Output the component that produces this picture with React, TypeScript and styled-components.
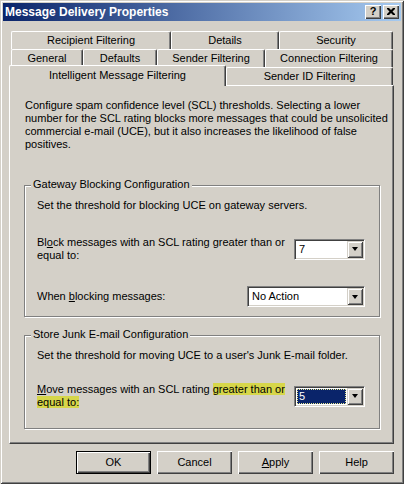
import React from 'react'
import styled, {createGlobalStyle} from 'styled-components'

const GlobalStyle = createGlobalStyle`
  html, body {
    margin: 0;
    padding: 0;
    background: #d4d0c8;
  }
  body {
    font-family: "Liberation Sans", Arial, sans-serif;
    font-size: 11px;
    line-height: 13px;
    color: #000;
  }
`

const Window = styled.div`
  box-sizing: border-box;
  width: 404px;
  height: 484px;
  padding: 3px;
  background: #d4d0c8;
  box-shadow: inset 1px 1px 0 #d4d0c8, inset -1px -1px 0 #404040,
    inset 2px 2px 0 #fff, inset -2px -2px 0 #808080;
  display: flex;
  flex-direction: column;
`

const TitleBar = styled.div`
  height: 18px;
  display: flex;
  align-items: center;
  padding: 0 2px;
  background: linear-gradient(to right, #0a246a, #a6caf0);
`

const TitleText = styled.div`
  flex: 1;
  color: #fff;
  font-weight: bold;
  font-size: 12px;
  white-space: nowrap;
`

const CaptionButton = styled.div<{$gap?: number}>`
  box-sizing: border-box;
  width: 16px;
  height: 14px;
  margin-left: ${p => p.$gap ?? 0}px;
  display: flex;
  align-items: center;
  justify-content: center;
  background: #d4d0c8;
  box-shadow: inset 1px 1px 0 #fff, inset -1px -1px 0 #404040,
    inset -2px -2px 0 #808080;
  font-weight: bold;
  font-size: 11px;
  line-height: 11px;
  padding-bottom: 1px;
`

const Body = styled.div`
  display: flex;
  flex-direction: column;
  padding: 10px 7px 0 6px;
`

const TabStrip = styled.div`
  display: flex;
  flex-direction: column;
`

const TabRow = styled.div`
  display: flex;
  align-items: flex-start;
  height: 18px;
  padding-left: 2px;
`

const Tab = styled.div<{$w: number; $active?: boolean}>`
  box-sizing: border-box;
  position: relative;
  width: ${p => p.$w}px;
  height: ${p => (p.$active ? 21 : 18)}px;
  margin: ${p => (p.$active ? '-2px 0 0 -2px' : '0')};
  z-index: ${p => (p.$active ? 2 : 1)};
  display: flex;
  align-items: center;
  justify-content: center;
  padding-bottom: ${p => (p.$active ? 2 : 0)}px;
  background: #d4d0c8;
  border-top: 1px solid #fff;
  border-left: 1px solid #fff;
  border-right: 1px solid #404040;
  border-radius: 2px 2px 0 0;
  box-shadow: inset -1px 0 0 #808080;
  white-space: nowrap;
`

const Panel = styled.div`
  box-sizing: border-box;
  position: relative;
  z-index: 1;
  height: 359px;
  padding: 13px 0 0 14px;
  border: 1px solid;
  border-color: #fff #404040 #404040 #fff;
  box-shadow: inset -1px -1px 0 #808080;
  display: flex;
  flex-direction: column;
`

const Description = styled.div`
  padding-left: 1px;
  white-space: nowrap;
`

const GroupBox = styled.div<{$h: number; $top: number}>`
  box-sizing: border-box;
  position: relative;
  width: 356px;
  height: ${p => p.$h}px;
  margin-top: ${p => p.$top}px;
  padding: 13px 14px 0 12px;
  border: 1px solid #808080;
  box-shadow: inset 1px 1px 0 #fff, 1px 1px 0 #fff;
  display: flex;
  flex-direction: column;
`

const Legend = styled.div`
  position: absolute;
  top: -8px;
  left: 6px;
  padding: 0 2px;
  background: #d4d0c8;
  white-space: nowrap;
`

const Line = styled.div`
  white-space: nowrap;
`

const FieldRow = styled.div<{$top: number}>`
  display: flex;
  align-items: center;
  justify-content: space-between;
  margin-top: ${p => p.$top}px;
`

const Highlight = styled.span`
  background: #d6d64a;
`

const Combo = styled.div<{$w: number}>`
  box-sizing: border-box;
  width: ${p => p.$w}px;
  height: 21px;
  display: flex;
  padding: 1px;
  background: #fff;
  border: 1px solid;
  border-color: #808080 #fff #fff #808080;
  box-shadow: inset 1px 1px 0 #404040, inset -1px -1px 0 #d4d0c8;
`

const ComboField = styled.div<{$selected?: boolean}>`
  box-sizing: border-box;
  flex: 1;
  display: flex;
  align-items: center;
  padding-left: 1px;
  margin: 1px 1px 1px 1px;
  background: ${p => (p.$selected ? '#0a246a' : '#fff')};
  color: ${p => (p.$selected ? '#fff' : '#000')};
  border: 1px ${p => (p.$selected ? 'dotted #e8e890' : 'solid #fff')};
  white-space: nowrap;
`

const DropButton = styled.div`
  box-sizing: border-box;
  width: 16px;
  height: 17px;
  display: flex;
  align-items: center;
  justify-content: center;
  background: #d4d0c8;
  box-shadow: inset 1px 1px 0 #d4d0c8, inset -1px -1px 0 #404040,
    inset 2px 2px 0 #fff, inset -2px -2px 0 #808080;
  &::after {
    content: '';
    width: 0;
    height: 0;
    border-left: 3.5px solid transparent;
    border-right: 3.5px solid transparent;
    border-top: 4px solid #000;
  }
`

const ButtonRow = styled.div`
  display: flex;
  justify-content: flex-end;
  gap: 6px;
  margin-top: 7px;
`

const Button = styled.div<{$default?: boolean}>`
  box-sizing: border-box;
  width: 75px;
  height: 23px;
  display: flex;
  align-items: center;
  justify-content: center;
  background: #d4d0c8;
  border: ${p => (p.$default ? '1px solid #000' : 'none')};
  box-shadow: inset 1px 1px 0 #fff, inset -1px -1px 0 #404040,
    inset -2px -2px 0 #808080;
`

const ComboBox = ({
  width,
  value,
  selected,
}: {
  width: number
  value: string
  selected?: boolean
}) => (
  <Combo $w={width}>
    <ComboField $selected={selected}>{value}</ComboField>
    <DropButton />
  </Combo>
)

export default function App() {
  return (
    <>
      <GlobalStyle />
      <Window>
        <TitleBar>
          <TitleText>Message Delivery Properties</TitleText>
          <CaptionButton>?</CaptionButton>
          <CaptionButton $gap={2}>
            <svg width="8" height="7" viewBox="0 0 8 7">
              <path
                d="M0 0h2l2 2 2-2h2v1L5.5 3.5 8 6v1H6L4 5 2 7H0V6l2.5-2.5L0 1z"
                fill="#000"
              />
            </svg>
          </CaptionButton>
        </TitleBar>
        <Body>
          <TabStrip>
            <TabRow>
              <Tab $w={160}>Recipient Filtering</Tab>
              <Tab $w={108}>Details</Tab>
              <Tab $w={114}>Security</Tab>
            </TabRow>
            <TabRow>
              <Tab $w={72}>General</Tab>
              <Tab $w={74}>Defaults</Tab>
              <Tab $w={108}>Sender Filtering</Tab>
              <Tab $w={128}>Connection Filtering</Tab>
            </TabRow>
            <TabRow>
              <Tab $w={217} $active>
                Intelligent Message Filtering
              </Tab>
              <Tab $w={167}>Sender ID Filtering</Tab>
            </TabRow>
          </TabStrip>
          <Panel>
            <Description>
              Configure spam confidence level (SCL) thresholds. Selecting a lower
              <br />
              number for the SCL rating blocks more messages that could be unsolicited
              <br />
              commercial e-mail (UCE), but it also increases the likelihood of false
              <br />
              positives.
            </Description>
            <GroupBox $h={132} $top={34}>
              <Legend>Gateway Blocking Configuration</Legend>
              <Line>Set the threshold for blocking UCE on gateway servers.</Line>
              <FieldRow $top={24}>
                <Line>
                  Bl<u>o</u>ck messages with an SCL rating greater than or
                  <br />
                  equal to:
                </Line>
                <ComboBox width={71} value="7" />
              </FieldRow>
              <FieldRow $top={24}>
                <Line>
                  When <u>b</u>locking messages:
                </Line>
                <ComboBox width={118} value="No Action" />
              </FieldRow>
            </GroupBox>
            <GroupBox $h={94} $top={18}>
              <Legend>Store Junk E-mail Configuration</Legend>
              <Line>Set the threshold for moving UCE to a user's Junk E-mail folder.</Line>
              <FieldRow $top={21}>
                <Line>
                  <u>M</u>ove messages with an SCL rating{' '}
                  <Highlight>greater than or</Highlight>
                  <br />
                  <Highlight>equal to:</Highlight>
                </Line>
                <ComboBox width={71} value="5" selected />
              </FieldRow>
            </GroupBox>
          </Panel>
          <ButtonRow>
            <Button $default>OK</Button>
            <Button>Cancel</Button>
            <Button>
              <u>A</u>pply
            </Button>
            <Button>Help</Button>
          </ButtonRow>
        </Body>
      </Window>
    </>
  )
}
